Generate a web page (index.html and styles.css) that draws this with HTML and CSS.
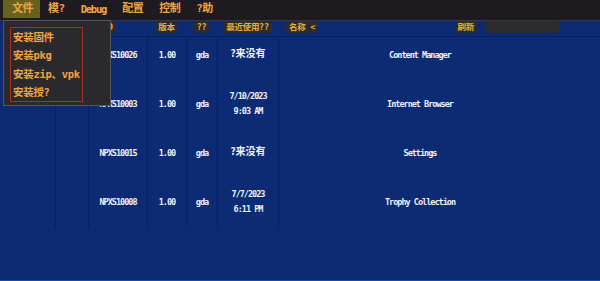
FILE: index.html
```html
<!DOCTYPE html>
<html>
<head>
<meta charset="utf-8">
<link rel="stylesheet" href="styles.css">
</head>
<body>
<div class="app">
  <nav class="menubar">
    <span class="menu-item active">文件</span>
    <span class="menu-item">模?</span>
    <span class="menu-item latin">Debug</span>
    <span class="menu-item">配置</span>
    <span class="menu-item">控制</span>
    <span class="menu-item">?助</span>
  </nav>
  <main class="main">
    <div class="table">
      <div class="hcell"></div>
      <div class="hcell"></div>
      <div class="hcell hid"><span class="hlabel">ID</span></div>
      <div class="hcell"><span class="hlabel">版本</span></div>
      <div class="hcell"><span class="hlabel">??</span></div>
      <div class="hcell"><span class="hlabel">最近使用??</span></div>
      <div class="hcell hname"><span class="hlabel">名称 &lt;</span><span class="hright"><span class="hlabel">刷新</span><span class="search"></span></span></div>
      <div class="hcell"></div>

      <div class="cell first"></div>
      <div class="cell"></div>
      <div class="cell">NPXS10026</div>
      <div class="cell">1.00</div>
      <div class="cell">gda</div>
      <div class="cell cjk">?来没有</div>
      <div class="cell">Content Manager</div>
      <div class="cell last"></div>

      <div class="cell first"></div>
      <div class="cell"></div>
      <div class="cell">NPXS10003</div>
      <div class="cell">1.00</div>
      <div class="cell">gda</div>
      <div class="cell date">7/10/2023<br>9:03 AM</div>
      <div class="cell">Internet Browser</div>
      <div class="cell last"></div>

      <div class="cell first"></div>
      <div class="cell"></div>
      <div class="cell">NPXS10015</div>
      <div class="cell">1.00</div>
      <div class="cell">gda</div>
      <div class="cell cjk">?来没有</div>
      <div class="cell">Settings</div>
      <div class="cell last"></div>

      <div class="cell first short"></div>
      <div class="cell short"></div>
      <div class="cell short">NPXS10008</div>
      <div class="cell short">1.00</div>
      <div class="cell short">gda</div>
      <div class="cell short date">7/7/2023<br>6:11 PM</div>
      <div class="cell short">Trophy Collection</div>
      <div class="cell last short"></div>
    </div>
  </main>
  <div class="dropdown">
    <div class="dropdown-box">
      <div class="dd-item">安装固件</div>
      <div class="dd-item">安装pkg</div>
      <div class="dd-item">安装zip、vpk</div>
      <div class="dd-item">安装授?</div>
    </div>
  </div>
</div>
</body>
</html>
```

FILE: styles.css
```css
* { box-sizing: border-box; }
html, body {
  margin: 0;
  padding: 0;
}
body {
  width: 600px;
  height: 281px;
  overflow: hidden;
  background: #0c2b74;
  font-family: "DejaVu Sans Mono", "Noto Sans CJK SC", monospace;
}
.app {
  position: relative;
  width: 600px;
  height: 281px;
}
.menubar {
  height: 21px;
  background: #1d1b20;
  border-bottom: 1px solid #3a383d;
  display: flex;
  align-items: flex-start;
  padding-left: 3px;
}
.menu-item {
  height: 18px;
  line-height: 18px;
  padding: 0 8px 0 8px;
  color: #f2a440;
  font-weight: bold;
  font-size: 11px;
  letter-spacing: -0.5px;
}
.menu-item.latin {
  font-size: 10.5px;
  letter-spacing: -1.2px;
}
.menu-item.active {
  background: #68621f;
  padding: 0 7px 0 9px;
}
.main {
  height: 260px;
  border-bottom: 1px solid #1c4aa2;
  background: #0c2b74;
}
.table {
  display: grid;
  grid-template-columns: 55px 33px 59px 39px 31px 61px 283px 1fr;
}
.hcell {
  height: 16px;
  border-bottom: 1px solid #072160;
  display: flex;
  justify-content: center;
  align-items: flex-start;
}
.hid {
  justify-content: flex-start;
  padding-left: 12px;
}
.hname {
  justify-content: space-between;
  padding-left: 8px;
  padding-right: 2px;
}
.hright {
  display: flex;
  gap: 9px;
}
.hlabel {
  height: 12px;
  line-height: 12px;
  padding: 0 3px;
  background: #2c2b30;
  border-radius: 2px;
  color: #e6b23a;
  font-size: 8.5px;
  font-weight: bold;
  letter-spacing: -0.3px;
  white-space: nowrap;
}
.search {
  width: 73px;
  height: 12px;
  background: #2c2b30;
  border-radius: 2px;
}
.cell {
  height: 49px;
  padding-bottom: 13px;
  display: flex;
  align-items: center;
  justify-content: center;
  text-align: center;
  color: #eef0f4;
  font-weight: bold;
  font-size: 8.5px;
  letter-spacing: -1px;
  line-height: 12px;
  border-left: 1px solid #072160;
  white-space: nowrap;
}
.cell.short {
  height: 44px;
  padding-bottom: 8px;
}
.cell.first { border-left: none; }
.cell.last { border-left: none; }
.cell.cjk {
  font-family: "Noto Sans CJK SC", sans-serif;
  font-size: 10px;
  letter-spacing: 0;
  padding-bottom: 17px;
}
.cell.date {
  line-height: 15px;
}
.dropdown {
  position: absolute;
  left: 3px;
  top: 20px;
  width: 108px;
  height: 86px;
  background: #2a2a2e;
  border: 1px solid #56555a;
  padding: 6px 0 0 6px;
}
.dropdown-box {
  width: 73px;
  height: 75px;
  border: 1px solid #a8321f;
  padding-left: 2px;
}
.dd-item {
  height: 18.3px;
  line-height: 18px;
  color: #f2a440;
  font-weight: bold;
  font-size: 10.5px;
  letter-spacing: -0.3px;
  white-space: nowrap;
}
```
